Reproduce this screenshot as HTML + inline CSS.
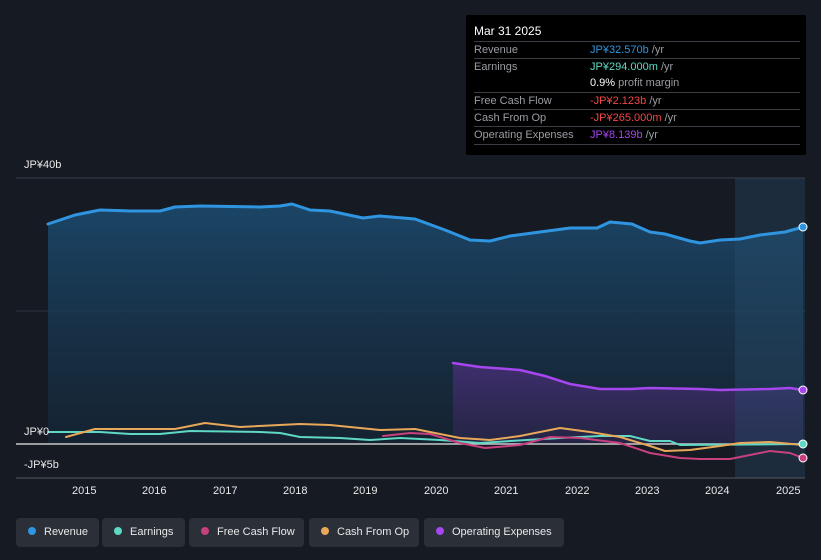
<!DOCTYPE html>
<html><head><meta charset="utf-8"><style>
body{margin:0;width:821px;height:560px;background:#151a23;font-family:"Liberation Sans",sans-serif;overflow:hidden;position:relative}
.tip{position:absolute;left:466px;top:15px;width:340px;height:140px;background:#000;border-radius:2px}
.tip .h{position:absolute;left:8px;top:9px;color:#fff;font-size:12px}
.row{position:absolute;left:8px;width:326px;border-top:1px solid #3a3d44;height:17px;font-size:11px;color:#9a9da3;line-height:17px}
.row b{font-weight:normal;position:absolute;left:116px}
.lg{position:absolute;top:518px;height:29px;background:#2a2f38;border-radius:4px;color:#e8e8e8;font-size:11px;line-height:29px}
.lg i{display:inline-block;width:8px;height:8px;border-radius:50%;margin:0 8px 0 12px;vertical-align:0}
.ax{position:absolute;color:#e8e8e8;font-size:11px}
svg path{stroke-linejoin:round;stroke-linecap:round}
</style></head><body>
<svg width="821" height="560" style="position:absolute;left:0;top:0">
<defs><linearGradient id="g" x1="0" y1="0" x2="0" y2="1"><stop offset="0" stop-color="#1c4a6e" stop-opacity=".9"/><stop offset="1" stop-color="#15283a" stop-opacity=".6"/></linearGradient>
<linearGradient id="p" x1="0" y1="0" x2="0" y2="1"><stop offset="0" stop-color="#4a2f7a" stop-opacity=".8"/><stop offset="1" stop-color="#2e2650" stop-opacity=".6"/></linearGradient></defs>
<line x1="16" y1="178" x2="805" y2="178" stroke="#3a3f48"/>
<line x1="16" y1="311" x2="805" y2="311" stroke="#2e333c"/>
<path d="M48 224 L75 215 L100 210 L130 211 L160 211 L175 207 L200 206 L260 207 L280 206 L292 204 L310 210 L330 211 L363 218 L380 216 L415 219 L445 230 L470 240 L490 241 L510 236 L540 232 L570 228 L597 228 L610 222 L632 224 L650 232 L665 234 L690 241 L700 243 L720 240 L740 239 L760 235 L785 232 L803 227 L803 444 L48 444Z" fill="url(#g)"/>
<path d="M453 363 L480 367 L520 370 L545 376 L570 384 L600 389 L630 389 L650 388 L700 389 L720 390 L770 389 L790 388 L803 390 L803 444 L453 444Z" fill="url(#p)"/>
<rect x="735" y="178" width="70" height="300" fill="#2a5070" opacity=".35"/>
<path d="M48 224 L75 215 L100 210 L130 211 L160 211 L175 207 L200 206 L260 207 L280 206 L292 204 L310 210 L330 211 L363 218 L380 216 L415 219 L445 230 L470 240 L490 241 L510 236 L540 232 L570 228 L597 228 L610 222 L632 224 L650 232 L665 234 L690 241 L700 243 L720 240 L740 239 L760 235 L785 232 L803 227" fill="none" stroke="#2f95e0" stroke-width="3"/>
<path d="M453 363 L480 367 L520 370 L545 376 L570 384 L600 389 L630 389 L650 388 L700 389 L720 390 L770 389 L790 388 L803 390" fill="none" stroke="#a646ee" stroke-width="2.5"/>
<line x1="16" y1="444" x2="805" y2="444" stroke="#c8c8c8" stroke-width="1.5"/>
<path d="M48 432 L100 432 L130 434 L160 434 L190 431 L260 432 L280 433 L300 437 L340 438 L370 440 L400 438 L440 440 L480 443 L510 441 L560 438 L600 436 L630 436 L650 441 L670 441 L680 445 L803 444" fill="none" stroke="#5fd8c4" stroke-width="2"/>
<path d="M383 436 L410 433 L430 434 L460 443 L485 448 L520 445 L550 437 L580 438 L620 443 L650 453 L680 458 L700 459 L730 459 L750 455 L770 451 L790 453 L803 458" fill="none" stroke="#c9407e" stroke-width="2"/>
<path d="M66 437 L95 429 L175 429 L205 423 L240 427 L300 424 L330 425 L380 430 L415 429 L440 434 L460 438 L490 440 L520 436 L560 428 L590 432 L620 437 L650 446 L665 451 L690 450 L720 446 L740 443 L770 442 L803 445" fill="none" stroke="#e8a85a" stroke-width="2"/>
<circle cx="803" cy="227" r="4" fill="#2f95e0" stroke="#fff" stroke-width="1"/>
<circle cx="803" cy="390" r="4" fill="#a646ee" stroke="#fff" stroke-width="1"/>
<circle cx="803" cy="444" r="4" fill="#5fd8c4" stroke="#fff" stroke-width="1"/>
<circle cx="803" cy="458" r="4" fill="#c9407e" stroke="#fff" stroke-width="1"/>
<line x1="16" y1="478" x2="805" y2="478" stroke="#555a62"/>
</svg>
<div class="ax" style="left:24px;top:159px">JP¥40b</div>
<div class="ax" style="left:24px;top:426px">JP¥0</div>
<div class="ax" style="left:24px;top:459px">-JP¥5b</div>
<div class="ax" style="left:72px;top:485px">2015</div><div class="ax" style="left:142px;top:485px">2016</div><div class="ax" style="left:213px;top:485px">2017</div><div class="ax" style="left:283px;top:485px">2018</div><div class="ax" style="left:353px;top:485px">2019</div><div class="ax" style="left:424px;top:485px">2020</div><div class="ax" style="left:494px;top:485px">2021</div><div class="ax" style="left:565px;top:485px">2022</div><div class="ax" style="left:635px;top:485px">2023</div><div class="ax" style="left:705px;top:485px">2024</div><div class="ax" style="left:776px;top:485px">2025</div>
<div class="tip"><div class="h">Mar 31 2025</div>
<div class="row" style="top:26px">Revenue<b style="color:#2f95e0">JP¥32.570b <span style="color:#9a9da3">/yr</span></b></div>
<div class="row" style="top:43px">Earnings<b style="color:#5fd8c4">JP¥294.000m <span style="color:#9a9da3">/yr</span></b></div>
<div class="row" style="top:60px;border:0"><b style="color:#fff">0.9% <span style="color:#9a9da3">profit margin</span></b></div>
<div class="row" style="top:77px">Free Cash Flow<b style="color:#f04848">-JP¥2.123b <span style="color:#9a9da3">/yr</span></b></div>
<div class="row" style="top:94px">Cash From Op<b style="color:#f04848">-JP¥265.000m <span style="color:#9a9da3">/yr</span></b></div>
<div class="row" style="top:111px;border-bottom:1px solid #3a3d44">Operating Expenses<b style="color:#a646ee">JP¥8.139b <span style="color:#9a9da3">/yr</span></b></div>
</div>
<div class="lg" style="left:16px;width:83px"><i style="background:#2f95e0"></i>Revenue</div>
<div class="lg" style="left:102px;width:83px"><i style="background:#5fd8c4"></i>Earnings</div>
<div class="lg" style="left:189px;width:115px"><i style="background:#c9407e"></i>Free Cash Flow</div>
<div class="lg" style="left:309px;width:110px"><i style="background:#e8a85a"></i>Cash From Op</div>
<div class="lg" style="left:424px;width:140px"><i style="background:#a646ee"></i>Operating Expenses</div>
</body></html>
